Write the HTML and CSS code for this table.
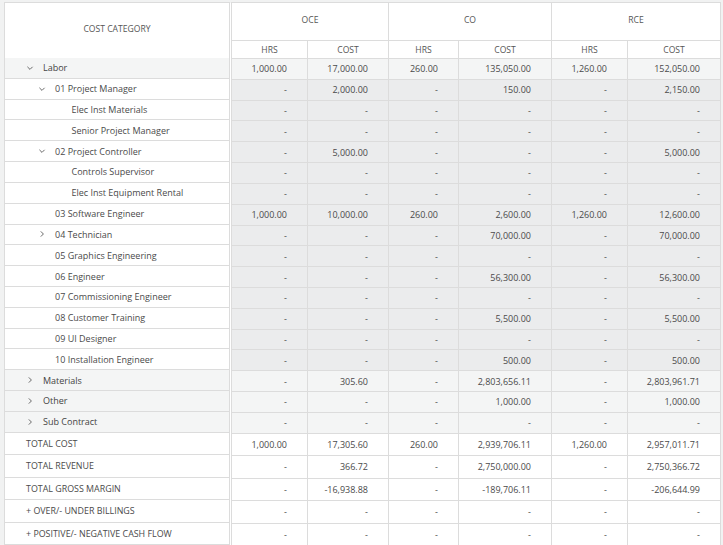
FILE: index.html
```html
<!DOCTYPE html>
<html>
<head>
<meta charset="utf-8">
<link rel="stylesheet" href="styles.css">
</head>
<body>
<div class="grid">
  <div class="pane-left">
    <div class="head-cat">COST CATEGORY</div>
    <div class="lrow group lvl0"><span class="chev"><svg viewBox="0 0 12 12"><polyline points="3.4,4.8 6,7.4 8.6,4.8"/></svg></span><span>Labor</span></div>
    <div class="lrow lvl1"><span class="chev"><svg viewBox="0 0 12 12"><polyline points="3.4,4.8 6,7.4 8.6,4.8"/></svg></span><span>01 Project Manager</span></div>
    <div class="lrow lvl2"><span>Elec Inst Materials</span></div>
    <div class="lrow lvl2"><span>Senior Project Manager</span></div>
    <div class="lrow lvl1"><span class="chev"><svg viewBox="0 0 12 12"><polyline points="3.4,4.8 6,7.4 8.6,4.8"/></svg></span><span>02 Project Controller</span></div>
    <div class="lrow lvl2"><span>Controls Supervisor</span></div>
    <div class="lrow lvl2"><span>Elec Inst Equipment Rental</span></div>
    <div class="lrow lvl1"><span class="chev"></span><span>03 Software Engineer</span></div>
    <div class="lrow lvl1"><span class="chev"><svg viewBox="0 0 12 12"><polyline points="4.8,3.4 7.4,6 4.8,8.6"/></svg></span><span>04 Technician</span></div>
    <div class="lrow lvl1"><span class="chev"></span><span>05 Graphics Engineering</span></div>
    <div class="lrow lvl1"><span class="chev"></span><span>06 Engineer</span></div>
    <div class="lrow lvl1"><span class="chev"></span><span>07 Commissioning Engineer</span></div>
    <div class="lrow lvl1"><span class="chev"></span><span>08 Customer Training</span></div>
    <div class="lrow lvl1"><span class="chev"></span><span>09 UI Designer</span></div>
    <div class="lrow lvl1"><span class="chev"></span><span>10 Installation Engineer</span></div>
    <div class="lrow group lvl0"><span class="chev"><svg viewBox="0 0 12 12"><polyline points="4.8,3.4 7.4,6 4.8,8.6"/></svg></span><span>Materials</span></div>
    <div class="lrow group lvl0"><span class="chev"><svg viewBox="0 0 12 12"><polyline points="4.8,3.4 7.4,6 4.8,8.6"/></svg></span><span>Other</span></div>
    <div class="lrow group lvl0"><span class="chev"><svg viewBox="0 0 12 12"><polyline points="4.8,3.4 7.4,6 4.8,8.6"/></svg></span><span>Sub Contract</span></div>
    <div class="lrow total"><span>TOTAL COST</span></div>
    <div class="lrow total"><span>TOTAL REVENUE</span></div>
    <div class="lrow total"><span>TOTAL GROSS MARGIN</span></div>
    <div class="lrow total"><span>+ OVER/- UNDER BILLINGS</span></div>
    <div class="lrow total"><span>+ POSITIVE/- NEGATIVE CASH FLOW</span></div>
  </div>
  <div class="split"></div>
  <div class="pane-right">
    <div class="rrow head1"><div class="c span2">OCE</div><div class="c span2">CO</div><div class="c span2">RCE</div></div>
    <div class="rrow head2"><div class="c">HRS</div><div class="c">COST</div><div class="c">HRS</div><div class="c">COST</div><div class="c">HRS</div><div class="c">COST</div></div>

    <div class="rrow group"><div class="c">1,000.00</div><div class="c">17,000.00</div><div class="c">260.00</div><div class="c">135,050.00</div><div class="c">1,260.00</div><div class="c">152,050.00</div></div>
    <div class="rrow child"><div class="c">-</div><div class="c">2,000.00</div><div class="c">-</div><div class="c">150.00</div><div class="c">-</div><div class="c">2,150.00</div></div>
    <div class="rrow child"><div class="c">-</div><div class="c">-</div><div class="c">-</div><div class="c">-</div><div class="c">-</div><div class="c">-</div></div>
    <div class="rrow child"><div class="c">-</div><div class="c">-</div><div class="c">-</div><div class="c">-</div><div class="c">-</div><div class="c">-</div></div>
    <div class="rrow child"><div class="c">-</div><div class="c">5,000.00</div><div class="c">-</div><div class="c">-</div><div class="c">-</div><div class="c">5,000.00</div></div>
    <div class="rrow child"><div class="c">-</div><div class="c">-</div><div class="c">-</div><div class="c">-</div><div class="c">-</div><div class="c">-</div></div>
    <div class="rrow child"><div class="c">-</div><div class="c">-</div><div class="c">-</div><div class="c">-</div><div class="c">-</div><div class="c">-</div></div>
    <div class="rrow child"><div class="c">1,000.00</div><div class="c">10,000.00</div><div class="c">260.00</div><div class="c">2,600.00</div><div class="c">1,260.00</div><div class="c">12,600.00</div></div>
    <div class="rrow child"><div class="c">-</div><div class="c">-</div><div class="c">-</div><div class="c">70,000.00</div><div class="c">-</div><div class="c">70,000.00</div></div>
    <div class="rrow child"><div class="c">-</div><div class="c">-</div><div class="c">-</div><div class="c">-</div><div class="c">-</div><div class="c">-</div></div>
    <div class="rrow child"><div class="c">-</div><div class="c">-</div><div class="c">-</div><div class="c">56,300.00</div><div class="c">-</div><div class="c">56,300.00</div></div>
    <div class="rrow child"><div class="c">-</div><div class="c">-</div><div class="c">-</div><div class="c">-</div><div class="c">-</div><div class="c">-</div></div>
    <div class="rrow child"><div class="c">-</div><div class="c">-</div><div class="c">-</div><div class="c">5,500.00</div><div class="c">-</div><div class="c">5,500.00</div></div>
    <div class="rrow child"><div class="c">-</div><div class="c">-</div><div class="c">-</div><div class="c">-</div><div class="c">-</div><div class="c">-</div></div>
    <div class="rrow child"><div class="c">-</div><div class="c">-</div><div class="c">-</div><div class="c">500.00</div><div class="c">-</div><div class="c">500.00</div></div>
    <div class="rrow group"><div class="c">-</div><div class="c">305.60</div><div class="c">-</div><div class="c">2,803,656.11</div><div class="c">-</div><div class="c">2,803,961.71</div></div>
    <div class="rrow group"><div class="c">-</div><div class="c">-</div><div class="c">-</div><div class="c">1,000.00</div><div class="c">-</div><div class="c">1,000.00</div></div>
    <div class="rrow group"><div class="c">-</div><div class="c">-</div><div class="c">-</div><div class="c">-</div><div class="c">-</div><div class="c">-</div></div>

    <div class="rrow total"><div class="c">1,000.00</div><div class="c">17,305.60</div><div class="c">260.00</div><div class="c">2,939,706.11</div><div class="c">1,260.00</div><div class="c">2,957,011.71</div></div>
    <div class="rrow total"><div class="c">-</div><div class="c">366.72</div><div class="c">-</div><div class="c">2,750,000.00</div><div class="c">-</div><div class="c">2,750,366.72</div></div>
    <div class="rrow total"><div class="c">-</div><div class="c">-16,938.88</div><div class="c">-</div><div class="c">-189,706.11</div><div class="c">-</div><div class="c">-206,644.99</div></div>
    <div class="rrow total"><div class="c">-</div><div class="c">-</div><div class="c">-</div><div class="c">-</div><div class="c">-</div><div class="c">-</div></div>
    <div class="rrow total"><div class="c">-</div><div class="c">-</div><div class="c">-</div><div class="c">-</div><div class="c">-</div><div class="c">-</div></div>
  </div>
</div>
</body>
</html>
```
FILE: styles.css
```css
* {
  box-sizing: border-box;
  margin: 0;
  padding: 0;
}

html, body {
  width: 723px;
  height: 545px;
  overflow: hidden;
}

body {
  background: #f1f2f2;
  font-family: "Open Sans", "Noto Sans", sans-serif;
  font-size: 9px;
  color: #4a4a4a;
}

.grid {
  display: flex;
  align-items: flex-start;
  padding: 2px 0 0 4px;
}

.pane-left {
  width: 226px;
  flex: none;
  background: #fff;
  border-top: 1px solid #dcdcdc;
  border-left: 1px solid #dcdcdc;
  border-right: 1px solid #dcdcdc;
}

.split {
  width: 1px;
  flex: none;
  align-self: stretch;
  background: #fff;
  margin-top: 1px;
}

.pane-right {
  width: 490px;
  flex: none;
  background: #fff;
  border-top: 1px solid #dcdcdc;
  border-left: 1px solid #dcdcdc;
}

.head-cat {
  height: 55px;
  display: flex;
  align-items: center;
  justify-content: center;
  padding-bottom: 4px;
  font-size: 8.6px;
  color: #555;
}

.lrow {
  height: 20.82px;
  display: flex;
  align-items: center;
  border-bottom: 1px solid #dcdcdc;
  white-space: nowrap;
}

.lrow.group {
  background: #f4f5f5;
}

.chev {
  width: 12px;
  height: 12px;
  flex: none;
  margin-right: 7px;
  display: flex;
}

.chev svg {
  width: 12px;
  height: 12px;
}

.chev polyline {
  fill: none;
  stroke: #6a6a6a;
  stroke-width: 1;
}

.lvl0 {
  padding-left: 19px;
  color: #444;
}

.lvl1 {
  padding-left: 31px;
}

.lvl2 {
  padding-left: 66.5px;
}

.lrow.total {
  height: 22.5px;
  padding-left: 21px;
  font-size: 8.9px;
}

.rrow {
  display: grid;
  grid-template-columns: 76px 81px 70px 93px 76px 93px;
  height: 20.82px;
}

.rrow .c {
  border-right: 1px solid #dcdcdc;
  border-bottom: 1px solid #dcdcdc;
  display: flex;
  align-items: center;
  justify-content: flex-end;
  padding-right: 20px;
  font-size: 9px;
  white-space: nowrap;
}

.rrow.head1 {
  height: 38px;
  grid-template-columns: 157px 163px 169px;
}

.rrow.head2 {
  height: 18px;
}

.rrow.head1 .c,
.rrow.head2 .c {
  justify-content: center;
  padding-right: 0;
  font-size: 8.6px;
  color: #555;
}

.rrow.head1 .c {
  padding-bottom: 4px;
}

.rrow.group {
  background: #f4f5f5;
}

.rrow.child {
  background: #ebeced;
}

.rrow.total {
  height: 22.5px;
}
```
